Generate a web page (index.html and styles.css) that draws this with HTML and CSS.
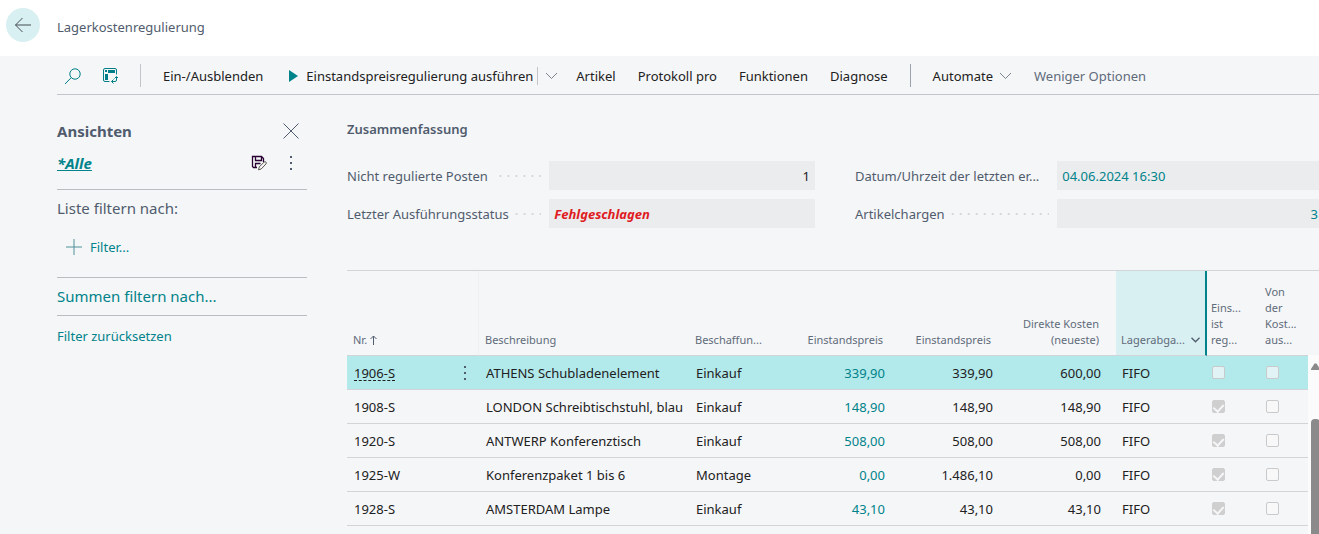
FILE: index.html
```html
<!DOCTYPE html>
<html lang="de">
  <head>
    <meta charset="UTF-8" />
    <meta name="viewport" content="width=device-width, initial-scale=1.0" />
    <title>Lagerkostenregulierung</title>
    <link rel="stylesheet" href="styles.css">
  </head>
  <body>
    <header class="header">
      <button class="back" aria-label="Zurück">
        <svg width="18" height="16" viewBox="0 0 18 16"><path d="M8.500 1L1.500 8l7 7M1.500 8H17" /></svg>
      </button>
      <h1 class="title">Lagerkostenregulierung</h1>
    </header>

    <nav class="toolbar">
      <button class="tool search" aria-label="Suchen">
        <svg width="18" height="18" viewBox="0 0 18 18"><circle cx="11" cy="7" r="5.200" /><path d="M7.200 10.700L1 17" /></svg>
      </button>
      <button class="tool analyse" aria-label="Analysemodus">
        <svg width="16" height="16" viewBox="0 0 16 16">
          <path d="M7.500 13.500H3a1.500 1.500 0 0 1-1.500-1.500V2A1.500 1.500 0 0 1 3 .5h10A1.500 1.500 0 0 1 14.500 2v4.500" />
          <path class="fill" d="M3 2h2v2H3zM6 2h7v3H6zM3 6h3v6H3z" />
          <path d="M14.500 9v3a1.500 1.500 0 0 1-1.500 1.500H9.500M12.500 10.500l2-2 1.500 1.500M11.500 11.500l-2 2 2 2" />
        </svg>
      </button>
      <span class="divider"></span>
      <button class="tool">Ein-/Ausblenden</button>
      <div class="split">
        <button class="tool run">
          <svg width="9" height="12" viewBox="0 0 9 12"><path d="M0 0v12l9-6z" /></svg>
          Einstandspreisregulierung ausführen
        </button>
        <button class="tool more" aria-label="Weitere Aktionen">
          <svg class="chevron" width="13" height="8" viewBox="0 0 13 8"><path d="M1 1l5.500 5.500L12 1" /></svg>
        </button>
      </div>
      <button class="tool">Artikel</button>
      <button class="tool">Protokoll pro</button>
      <button class="tool">Funktionen</button>
      <button class="tool">Diagnose</button>
      <span class="divider dark"></span>
      <button class="tool automate">
        Automate
        <svg class="chevron" width="13" height="8" viewBox="0 0 13 8"><path d="M1 1l5.500 5.500L12 1" /></svg>
      </button>
      <button class="tool muted">Weniger Optionen</button>
    </nav>

    <div class="page">
      <aside class="views">
        <div class="views-row">
          <h2>Ansichten</h2>
          <button class="icon" aria-label="Schließen">
            <svg width="16" height="16" viewBox="0 0 16 16"><path d="M.5.5l15 15M15.500.5l-15 15" /></svg>
          </button>
        </div>
        <div class="views-row current">
          <a href="#" class="view">*Alle</a>
          <button class="icon save" aria-label="Ansicht speichern">
            <svg width="16" height="16" viewBox="0 0 16 16">
              <path class="disk" d="M6 12.500H2.500L1.500 11.500V1.500h9l2 2V7M4.500 1.500V5.500h6V1.500M4.500 12.500V8.500h5" />
              <path class="pen" d="M7.500 14.800l.8-2.900L13.200 7q1-.7 1.800.1t0 1.800L10.200 14z" />
            </svg>
          </button>
          <button class="icon dots" aria-label="Mehr">
            <svg width="16" height="16" viewBox="0 0 16 16"><path d="M7 1h2v2H7zM7 7h2v2H7zM7 13h2v2H7z" /></svg>
          </button>
        </div>
        <div class="filter">
          <h3>Liste filtern nach:</h3>
          <button class="add">
            <svg width="16" height="16" viewBox="0 0 16 16"><path d="M0 8h16M8 0v16" /></svg>
            Filter...
          </button>
        </div>
        <button class="totals">Summen filtern nach...</button>
        <button class="reset">Filter zurücksetzen</button>
      </aside>

      <main class="content">
        <h2 class="section">Zusammenfassung</h2>
        <div class="fields">
          <div class="field">
            <label for="open">Nicht regulierte Posten</label>
            <span class="leader"></span>
            <input id="open" class="right" value="1" readonly />
          </div>
          <div class="field">
            <label for="date">Datum/Uhrzeit der letzten er...</label>
            <input id="date" class="link" value="04.06.2024 16:30" readonly />
          </div>
          <div class="field">
            <label for="status">Letzter Ausführungsstatus</label>
            <span class="leader"></span>
            <input id="status" class="failed" value="Fehlgeschlagen" readonly />
          </div>
          <div class="field">
            <label for="batches">Artikelchargen</label>
            <span class="leader"></span>
            <input id="batches" class="link right" value="3" readonly />
          </div>
        </div>

        <div class="list">
          <table>
            <colgroup>
              <col class="c-no" />
              <col class="c-menu" />
              <col />
              <col class="c-source" />
              <col class="c-price" />
              <col class="c-price" />
              <col class="c-price" />
              <col class="c-method" />
              <col class="c-check" />
              <col class="c-last" />
            </colgroup>
            <thead>
              <tr>
                <th>Nr. <svg class="sort" width="7" height="10" viewBox="0 0 7 10"><path d="M3.500 10V1M.5 4l3-3 3 3" /></svg></th>
                <th class="edge"></th>
                <th>Beschreibung</th>
                <th>Beschaffun...</th>
                <th class="num">Einstandspreis</th>
                <th class="num">Einstandspreis</th>
                <th class="num">Direkte Kosten<br />(neueste)</th>
                <th class="method"><div>Lagerabga...<svg width="9" height="6" viewBox="0 0 9 6"><path d="M.5.8l4 4 4-4" /></svg></div></th>
                <th class="narrow">Eins...<br />ist<br />reg...</th>
                <th class="narrow">Von<br />der<br />Kost...<br />aus...</th>
              </tr>
            </thead>
            <tbody>
              <tr class="selected">
                <td><a href="#" class="no">1906-S</a></td>
                <td class="menu">
                  <button class="icon dots" aria-label="Zeilenmenü">
                    <svg width="16" height="16" viewBox="0 0 16 16"><path d="M7 1h2v2H7zM7 7h2v2H7zM7 13h2v2H7z" /></svg>
                  </button>
                </td>
                <td>ATHENS Schubladenelement</td>
                <td>Einkauf</td>
                <td class="num"><a href="#">339,90</a></td>
                <td class="num">339,90</td>
                <td class="num">600,00</td>
                <td>FIFO</td>
                <td class="check"><input type="checkbox" aria-label="Einstandspreis ist reguliert" disabled /></td>
                <td class="check"><input type="checkbox" aria-label="Von der Kostenregulierung ausgeschlossen" disabled /></td>
              </tr>
              <tr>
                <td>1908-S</td>
                <td></td>
                <td>LONDON Schreibtischstuhl, blau</td>
                <td>Einkauf</td>
                <td class="num"><a href="#">148,90</a></td>
                <td class="num">148,90</td>
                <td class="num">148,90</td>
                <td>FIFO</td>
                <td class="check"><input type="checkbox" aria-label="Einstandspreis ist reguliert" checked disabled /></td>
                <td class="check"><input type="checkbox" aria-label="Von der Kostenregulierung ausgeschlossen" disabled /></td>
              </tr>
              <tr>
                <td>1920-S</td>
                <td></td>
                <td>ANTWERP Konferenztisch</td>
                <td>Einkauf</td>
                <td class="num"><a href="#">508,00</a></td>
                <td class="num">508,00</td>
                <td class="num">508,00</td>
                <td>FIFO</td>
                <td class="check"><input type="checkbox" aria-label="Einstandspreis ist reguliert" checked disabled /></td>
                <td class="check"><input type="checkbox" aria-label="Von der Kostenregulierung ausgeschlossen" disabled /></td>
              </tr>
              <tr>
                <td>1925-W</td>
                <td></td>
                <td>Konferenzpaket 1 bis 6</td>
                <td>Montage</td>
                <td class="num"><a href="#">0,00</a></td>
                <td class="num">1.486,10</td>
                <td class="num">0,00</td>
                <td>FIFO</td>
                <td class="check"><input type="checkbox" aria-label="Einstandspreis ist reguliert" checked disabled /></td>
                <td class="check"><input type="checkbox" aria-label="Von der Kostenregulierung ausgeschlossen" disabled /></td>
              </tr>
              <tr>
                <td>1928-S</td>
                <td></td>
                <td>AMSTERDAM Lampe</td>
                <td>Einkauf</td>
                <td class="num"><a href="#">43,10</a></td>
                <td class="num">43,10</td>
                <td class="num">43,10</td>
                <td>FIFO</td>
                <td class="check"><input type="checkbox" aria-label="Einstandspreis ist reguliert" checked disabled /></td>
                <td class="check"><input type="checkbox" aria-label="Von der Kostenregulierung ausgeschlossen" disabled /></td>
              </tr>
            </tbody>
          </table>
          <div class="scroll">
            <svg width="9" height="7" viewBox="0 0 9 7"><path d="M3.500.5L0 6v1h9V6L5.500.5z" /></svg>
            <div class="thumb"></div>
          </div>
        </div>
      </main>
    </div>
  </body>
</html>
```
FILE: styles.css
```css
* {
  box-sizing: border-box;
}
body {
  margin: 0;
  min-height: 100vh;
  display: flex;
  flex-direction: column;
  overflow: hidden;
  background-color: #f5f6f8;
  color: #212121;
  font-family: "Noto Sans", "Open Sans", sans-serif;
  font-size: 13px;
  line-height: 18px;
}
h1,
h2,
h3 {
  margin: 0;
  color: #505c6d;
}
a {
  color: #00838a;
  text-decoration: none;
}
button,
input {
  font: inherit;
  color: inherit;
  border: none;
  padding: 0;
  margin: 0;
  background: none;
}
button {
  cursor: pointer;
}
svg {
  display: block;
  flex: none;
  fill: none;
  stroke: #505c6d;
}

/* header */
.header {
  display: flex;
  align-items: center;
  gap: 17px;
  height: 56px;
  padding: 0 6px 6px;
  background-color: #ffffff;
}
.back {
  width: 34px;
  height: 34px;
  border-radius: 50%;
  background-color: #d9f0f2;
  display: flex;
  align-items: center;
  justify-content: center;
}
.back svg {
  stroke: #454c50;
}
.title {
  font-size: 13px;
  font-weight: normal;
  padding-top: 4px;
}

/* toolbar */
.toolbar {
  display: flex;
  align-items: center;
  gap: 22px;
  height: 39px;
  margin-left: 57px;
  padding: 1px 0 0 7px;
  border-bottom: 1px solid #c2c5ca;
  white-space: nowrap;
}
.tool {
  display: flex;
  align-items: center;
}
.search svg,
.analyse svg {
  stroke: #007e87;
}
.search {
  margin-right: -2px;
}
.analyse .fill {
  fill: #007e87;
  stroke: none;
}
.divider {
  width: 1px;
  height: 23px;
  background-color: #c2c5ca;
}
.dark {
  background-color: #9aa3ad;
}
.split {
  display: flex;
  align-items: center;
  margin-left: 4px;
}
.run {
  gap: 8px;
}
.run svg {
  fill: #00838a;
  stroke: none;
}
.more {
  height: 18px;
  margin-left: 4px;
  padding-left: 7px;
  border-left: 1px solid #c2c5ca;
}
.split + .tool {
  margin-left: -4px;
}
.chevron {
  stroke: #7b838d;
}
.automate {
  gap: 6px;
}
.muted {
  color: #5f6b7a;
}

.page {
  flex: 1;
  display: flex;
  gap: 40px;
  padding-left: 57px;
}

/* views pane */
.views {
  flex: none;
  width: 250px;
  padding-top: 20px;
  font-size: 15px;
}
.views h2 {
  flex: 1;
  font-size: 15px;
}
.views-row {
  display: flex;
  align-items: center;
  gap: 16px;
  height: 32px;
  padding-right: 8px;
}
.current {
  height: 43px;
  padding-bottom: 11px;
  border-bottom: 1px solid #b9bcc1;
}
.view {
  font-weight: bold;
  font-style: italic;
  text-decoration: underline;
  margin-right: auto;
}
.save .disk {
  stroke: #2a0033;
  stroke-width: 1.3;
}
.save .pen {
  fill: #f5f6f8;
  stroke: #5c564e;
}
.dots svg {
  fill: #505c6d;
  stroke: none;
}
.filter {
  border-bottom: 1px solid #b9bcc1;
  padding-bottom: 11px;
}
.filter h3 {
  font-size: 15px;
  font-weight: normal;
  line-height: 37px;
  padding-bottom: 1px;
}
.add {
  display: flex;
  align-items: center;
  gap: 8px;
  height: 38px;
  padding-left: 9px;
  font-size: 13px;
  color: #00838a;
}
.add svg {
  stroke: #4f9297;
}
.totals,
.reset {
  display: block;
  width: 100%;
  height: 38px;
  text-align: left;
  color: #00838a;
}
.totals {
  padding-bottom: 2px;
  border-bottom: 1px solid #b9bcc1;
}
.reset {
  height: 40px;
  font-size: 13px;
}

/* content */
.content {
  flex: 1;
  min-width: 0;
  margin-right: -4px;
  padding-top: 20px;
  display: flex;
  flex-direction: column;
}
.section {
  font-size: 13px;
  font-weight: 600;
  line-height: 28px;
}
.fields {
  display: grid;
  grid-template-columns: 1fr 1fr;
  gap: 9px 40px;
  margin: 18px 0 42px;
}
.field {
  display: flex;
  align-items: center;
  justify-content: space-between;
  height: 29px;
  color: #505c6d;
}
.field label {
  white-space: nowrap;
}
.leader {
  flex: 1;
  height: 2px;
  margin: 0 8px 0 6px;
  background: linear-gradient(to left, #d6d8db 2px, transparent 2px) right / 8px 2px repeat-x;
}
.field input {
  width: calc(57% - 1px);
  height: 29px;
  padding: 0 5px;
  background-color: #ebecee;
  color: #212121;
}
.field .right {
  text-align: right;
}
.field .link {
  color: #00838a;
}
.field .failed {
  color: #e01b22;
  font-weight: bold;
  font-style: italic;
}

/* list */
.list {
  flex: 1;
  display: flex;
  align-items: stretch;
  border-top: 1px solid #d2d4d8;
}
table {
  flex: 1;
  align-self: flex-start;
  table-layout: fixed;
  width: 100%;
  border-collapse: separate;
  border-spacing: 0;
}
.c-no {
  width: 103px;
}
.c-menu {
  width: 29px;
}
.c-source {
  width: 103px;
}
.c-price {
  width: 108px;
}
.c-method {
  width: 91px;
}
.c-check {
  width: 54px;
}
.c-last {
  width: 47px;
}
th {
  height: 85px;
  padding: 0 6px 7px;
  vertical-align: bottom;
  text-align: left;
  font-size: 11px;
  font-weight: normal;
  line-height: 16px;
  color: #5f6b7a;
  white-space: nowrap;
  border-bottom: 1px solid #d2d4d8;
}
th.num {
  text-align: right;
  padding-right: 17px;
}
.sort {
  display: inline-block;
  vertical-align: -1px;
}
.edge {
  border-right: 1px solid #eff0f3;
}
.method {
  padding: 0 5px 7px;
  background-color: #d9f0f2;
  border-right: 2px solid #00838a;
}
.method div {
  display: flex;
  align-items: center;
  justify-content: space-between;
}
.method svg {
  stroke-width: 1.3;
}
.narrow {
  padding: 0 4px 7px;
}
td {
  height: 34px;
  padding: 0 7px;
  white-space: nowrap;
  border-bottom: 1px solid #d2d4d8;
}
td.num {
  text-align: right;
  padding-right: 15px;
}
.num + td:not(.num) {
  padding-left: 6px;
}
.selected td {
  background-color: #b2e9eb;
}
.no {
  color: #212121;
  text-decoration: underline dashed 1px;
  text-underline-offset: 2px;
}
td.menu {
  padding: 0;
}
.menu .icon {
  display: block;
  margin-left: 7px;
}
td.check {
  padding: 0 5px;
}
.check input {
  appearance: none;
  display: flex;
  justify-content: center;
  width: 13px;
  height: 13px;
  border: 1px solid #c9cacc;
  border-radius: 2px;
  background-color: #f8f8f9;
}
.selected .check input {
  background-color: #e1f3f5;
}
.check input:checked {
  background-color: #cfcfcf;
  border-color: #cfcfcf;
}
.check input:checked::before {
  content: "";
  width: 5px;
  height: 8px;
  margin-top: 1px;
  border: solid #f5f6f8;
  border-width: 0 2px 2px 0;
  transform: rotate(42deg);
}
.scroll {
  width: 15px;
  margin-top: 84px;
  padding: 8px 3px 0;
  background-color: #fbfbfb;
  display: flex;
  flex-direction: column;
}
.scroll svg {
  fill: #8a8a8a;
  stroke: none;
}
.thumb {
  flex: 1;
  margin-top: 49px;
  border-radius: 4px 4px 0 0;
  background-color: #8a8a8a;
}
```
